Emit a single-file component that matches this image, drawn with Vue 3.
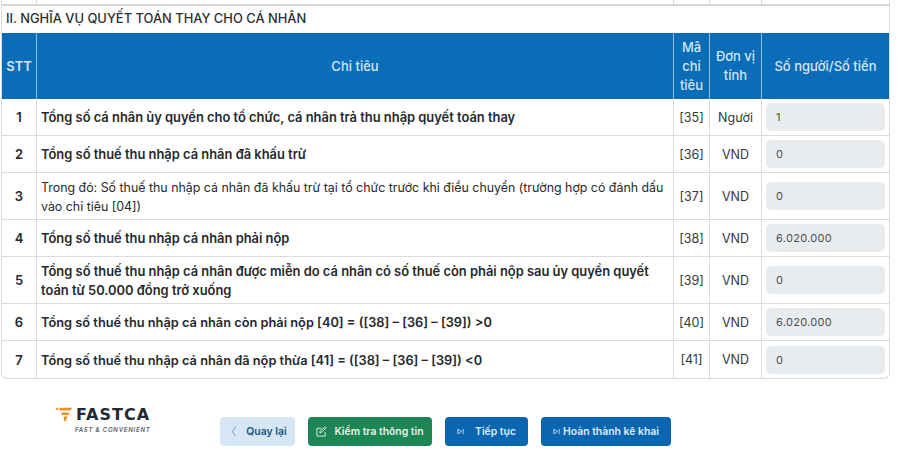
<script setup>
const rows = [
  { n: 1, text: 'Tổng số cá nhân ủy quyền cho tổ chức, cá nhân trả thu nhập quyết toán thay', code: '[35]', unit: 'Người', value: '1', h: 'r37' },
  { n: 2, text: 'Tổng số thuế thu nhập cá nhân đã khấu trừ', code: '[36]', unit: 'VND', value: '0', h: 'r37' },
  { n: 3, text: 'Trong đó: Số thuế thu nhập cá nhân đã khấu trừ tại tổ chức trước khi điều chuyển (trường hợp có đánh dấu vào chỉ tiêu [04])', code: '[37]', unit: 'VND', value: '0', h: 'r47', plain: true },
  { n: 4, text: 'Tổng số thuế thu nhập cá nhân phải nộp', code: '[38]', unit: 'VND', value: '6.020.000', h: 'r37' },
  { n: 5, text: 'Tổng số thuế thu nhập cá nhân được miễn do cá nhân có số thuế còn phải nộp sau ủy quyền quyết toán từ 50.000 đồng trở xuống', code: '[39]', unit: 'VND', value: '0', h: 'r47' },
  { n: 6, text: 'Tổng số thuế thu nhập cá nhân còn phải nộp [40] = ([38] – [36] – [39]) >0', code: '[40]', unit: 'VND', value: '6.020.000', h: 'r37', tight: true },
  { n: 7, text: 'Tổng số thuế thu nhập cá nhân đã nộp thừa [41] = ([38] – [36] – [39]) <0', code: '[41]', unit: 'VND', value: '0', h: 'r37', tight: true },
]
</script>

<template>
  <div class="page">
    <div class="card">
      <div class="sliver">
        <span class="s1"></span><span class="s2"></span><span class="s3"></span><span class="s4"></span><span class="s5"></span>
      </div>
      <div class="section">II. NGHĨA VỤ QUYẾT TOÁN THAY CHO CÁ NHÂN</div>
      <table class="grid">
        <colgroup>
          <col class="c1" /><col class="c2" /><col class="c3" /><col class="c4" /><col class="c5" />
        </colgroup>
        <thead>
          <tr>
            <th>STT</th>
            <th>Chỉ tiêu</th>
            <th class="narrow">Mã chỉ tiêu</th>
            <th class="narrow">Đơn vị tính</th>
            <th>Số người/Số tiền</th>
          </tr>
        </thead>
        <tbody>
          <tr v-for="r in rows" :key="r.n" :class="r.h">
            <td class="num">{{ r.n }}</td>
            <td class="desc" :class="{ plain: r.plain, tight: r.tight }">{{ r.text }}</td>
            <td class="mid">{{ r.code }}</td>
            <td class="mid">{{ r.unit }}</td>
            <td class="val"><div class="input">{{ r.value }}</div></td>
          </tr>
        </tbody>
      </table>
    </div>

    <div class="footer">
      <div class="logo">
        <div class="logo-top">
          <svg class="logo-mark" viewBox="0 0 20 18">
            <rect x="0" y="1" width="2.4" height="2.6" fill="#e8912a" />
            <path d="M4 1H19L17.5 4.2H4Z" fill="#e8912a" />
            <path d="M6.5 6.5H16L14.8 9.5H6.5Z" fill="#e8912a" />
            <path d="M9 11.5H13.8L11 17H9.5Z" fill="#e8912a" />
          </svg>
          <span class="logo-name">FASTCA</span>
        </div>
        <div class="logo-tag">FAST &amp; CONVENIENT</div>
      </div>
      <div class="buttons">
        <button class="btn back">
          <svg width="6" height="11" viewBox="0 0 6 11"><path d="M4.5 .8 1.5 5.5l3 4.7" fill="none" stroke="#7d93a6" stroke-width=".9" /></svg>
          <span>Quay lại</span>
        </button>
        <button class="btn green">
          <svg width="11" height="11" viewBox="0 0 12 12" fill="none" stroke="#e6f2ec" stroke-width="1">
            <path d="M10 6.5V11H1V2.5h5" />
            <path d="M4.5 5.5 10 .8l1.2 1.2-5.4 5-1.6.4z" />
          </svg>
          <span>Kiểm tra thông tin</span>
        </button>
        <button class="btn blue next">
          <svg width="7" height="7" viewBox="0 0 8 8" fill="none" stroke="#d5e6f5" stroke-width="1"><path d="M1 1v6M1.5 1.5 5 4 1.5 6.5M7 1v6" /></svg>
          <span>Tiếp tục</span>
        </button>
        <button class="btn blue finish">
          <svg width="7" height="7" viewBox="0 0 8 8" fill="none" stroke="#d5e6f5" stroke-width="1"><path d="M1 1v6M1.5 1.5 5 4 1.5 6.5M7 1v6" /></svg>
          <span>Hoàn thành kê khai</span>
        </button>
      </div>
    </div>
  </div>
</template>

<style scoped>
.page {
  width: 900px;
  height: 450px;
  overflow: hidden;
  background: #fff;
  font-family: Inter, "Noto Sans", sans-serif;
  color: #23272b;
  padding-left: 2px;
  box-sizing: border-box;
}
.card {
  width: 888px;
  box-sizing: border-box;
  border: 1px solid #d9dcdf;
  border-top: 0;
  border-left: 0;
  border-radius: 0 0 6px 6px;
  box-shadow: -1px 0 0 #d9dcdf;
}
.sliver {
  display: flex;
  height: 4px;
  border-bottom: 2px solid #d4d6d8;
}
.sliver span { display: block; border-right: 1px solid #d9dcdf; box-sizing: border-box; }
.s1 { width: 35px; }
.s2 { width: 637px; }
.s3 { width: 36px; }
.s4 { width: 52px; }
.s5 { flex: 1; border-right: 0 !important; }
.section {
  height: 27px;
  line-height: 26px;
  font-size: 12.9px;
  font-weight: 500;
  padding-left: 4px;
  color: #2b2f33;
}
.grid {
  width: 887px;
  table-layout: fixed;
  border-collapse: separate;
  border-spacing: 0;
}
.c1 { width: 34px; }
.c2 { width: 637px; }
.c3 { width: 36px; }
.c4 { width: 52px; }
.c5 { width: 128px; }
th {
  height: 66px;
  padding: 0 4px;
  box-sizing: border-box;
  background: #0b6cb8;
  color: #d3e6f5;
  font-size: 13px;
  font-weight: 500;
  line-height: 19px;
  text-align: center;
  border-left: 1px solid #8fbcdf;
}
th:first-child { border-left: 0; font-weight: 600; padding: 0; }
th.narrow { padding: 0; }
td {
  padding: 0;
  box-sizing: border-box;
  border-left: 1px solid #d9dcdf;
  border-bottom: 1px solid #d9dcdf;
  font-size: 12.5px;
  vertical-align: middle;
}
td:first-child { border-left: 0; }
tbody tr:last-child td { border-bottom: 0; }
.r37 td { height: 37px; }
.r47 td { height: 47px; }
.num { text-align: center; font-weight: 600; font-size: 13px; }
td.desc {
  padding: 1px 6px 0 4px;
  font-size: 12.9px;
  font-weight: 600;
  line-height: 19px;
  color: #26292d;
}
td.desc.plain { font-weight: 400; font-size: 12.4px; }
td.desc.tight { font-size: 12.8px; }
.mid { text-align: center; font-size: 12.5px; color: #33383c; }
td.val { padding: 0 4px; }
.input {
  height: 28px;
  line-height: 28px;
  padding-left: 10px;
  background: #e9ecef;
  border-radius: 5px;
  font-size: 11px;
  letter-spacing: 0.3px;
  color: #494f55;
}
.footer {
  display: flex;
  align-items: flex-start;
}
.logo {
  margin: 27px 0 0 54px;
  width: 96px;
}
.logo-top { display: flex; align-items: center; height: 17px; gap: 3px; }
.logo-mark { width: 17px; height: 15px; flex: none; }
.logo-name {
  font-family: "DejaVu Sans", Inter, sans-serif;
  font-size: 16px;
  font-weight: 700;
  letter-spacing: 1px;
  color: #232a33;
  line-height: 17px;
}
.logo-tag {
  font-size: 6px;
  font-style: italic;
  font-weight: 600;
  letter-spacing: 0.78px;
  color: #5a6068;
  margin: 3px 0 0 19px;
  white-space: nowrap;
}
.buttons {
  display: flex;
  gap: 13px;
  margin: 38px 0 0 68px;
}
.btn {
  display: flex;
  align-items: center;
  justify-content: center;
  height: 29px;
  border: 0;
  border-radius: 4px;
  font-family: inherit;
  font-size: 10.4px;
  font-weight: 600;
  padding: 0;
  white-space: nowrap;
}
.back { width: 75px; gap: 9px; padding-left: 3px; background: #d6e6f4; color: #1c5680; }
.green { width: 124px; gap: 7px; background: #1e8555; color: #e6f2ec; }
.blue { background: #0b66b2; color: #dcebf7; }
.next { width: 83px; gap: 11px; }
.finish { width: 130px; gap: 3px; }
</style>

<style>
html, body { margin: 0; background: #fff; }
</style>
